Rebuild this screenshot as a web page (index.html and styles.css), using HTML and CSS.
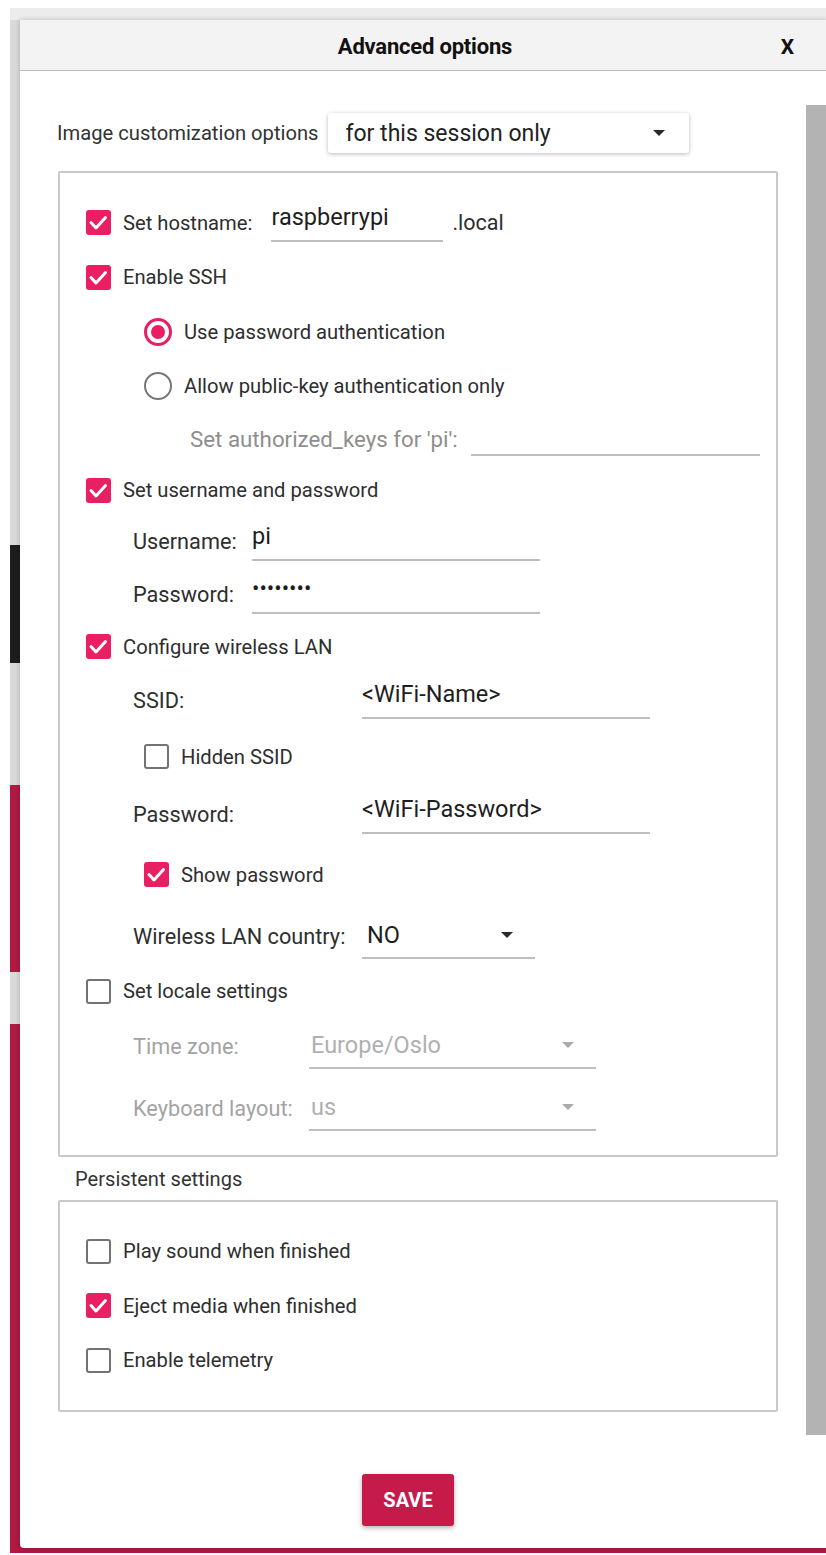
FILE: index.html
```html
<!DOCTYPE html>
<html lang="en">
<head>
<meta charset="utf-8">
<title>Advanced options</title>
<link rel="stylesheet" href="styles.css">
</head>
<body>
<div class="app">
  <section class="dialog">
    <header class="dialog-header">
      <span></span>
      <h1 class="dialog-title">Advanced options</h1>
      <span class="dialog-close">X</span>
    </header>

    <div class="dialog-main">
      <div class="scroll-content">
        <div class="scope-row">
          <span class="scope-label">Image customization options</span>
          <div class="select">
            <span>for this session only</span>
            <span class="caret"></span>
          </div>
        </div>

        <div class="group group-session">
          <div class="row h55">
            <span class="check on"><svg viewBox="0 0 25 25"><path d="M5 12.5l5 5.5 9.5-10.5"/></svg></span>
            <span class="label">Set hostname:</span>
            <span class="field field-host">raspberrypi</span>
            <span class="suffix">.local</span>
          </div>
          <div class="row h54">
            <span class="check on"><svg viewBox="0 0 25 25"><path d="M5 12.5l5 5.5 9.5-10.5"/></svg></span>
            <span class="label">Enable SSH</span>
          </div>
          <div class="row h55 indent-option">
            <span class="radio on"></span>
            <span class="label">Use password authentication</span>
          </div>
          <div class="row h54 indent-option">
            <span class="radio"></span>
            <span class="label">Allow public-key authentication only</span>
          </div>
          <div class="row h52 indent-keys">
            <span class="label muted col-keys">Set authorized_keys for 'pi':</span>
            <span class="field field-keys"></span>
          </div>
          <div class="row h50">
            <span class="check on"><svg viewBox="0 0 25 25"><path d="M5 12.5l5 5.5 9.5-10.5"/></svg></span>
            <span class="label">Set username and password</span>
          </div>
          <div class="row h53 indent-field">
            <span class="label sub col-user">Username:</span>
            <span class="field field-user">pi</span>
          </div>
          <div class="row h53 indent-field">
            <span class="label sub col-user">Password:</span>
            <span class="field field-user dots">&bull;&bull;&bull;&bull;&bull;&bull;&bull;&bull;</span>
          </div>
          <div class="row h51">
            <span class="check on"><svg viewBox="0 0 25 25"><path d="M5 12.5l5 5.5 9.5-10.5"/></svg></span>
            <span class="label">Configure wireless LAN</span>
          </div>
          <div class="row h56 indent-field">
            <span class="label sub col-wifi">SSID:</span>
            <span class="field field-wifi">&lt;WiFi-Name&gt;</span>
          </div>
          <div class="row h57 indent-option">
            <span class="check"></span>
            <span class="label">Hidden SSID</span>
          </div>
          <div class="row h59 indent-field">
            <span class="label sub col-wifi">Password:</span>
            <span class="field field-wifi">&lt;WiFi-Password&gt;</span>
          </div>
          <div class="row h61 indent-option">
            <span class="check on"><svg viewBox="0 0 25 25"><path d="M5 12.5l5 5.5 9.5-10.5"/></svg></span>
            <span class="label">Show password</span>
          </div>
          <div class="row h62 indent-field">
            <span class="label sub col-wifi">Wireless LAN country:</span>
            <span class="combo combo-country">NO<span class="caret"></span></span>
          </div>
          <div class="row h48">
            <span class="check"></span>
            <span class="label">Set locale settings</span>
          </div>
          <div class="row h62 indent-field">
            <span class="label sub muted-strong col-locale">Time zone:</span>
            <span class="combo combo-locale disabled">Europe/Oslo<span class="caret"></span></span>
          </div>
          <div class="row h62 indent-field">
            <span class="label sub muted-strong col-locale">Keyboard layout:</span>
            <span class="combo combo-locale disabled">us<span class="caret"></span></span>
          </div>
        </div>

        <div class="group-title">Persistent settings</div>

        <div class="group group-persistent">
          <div class="row h54">
            <span class="check"></span>
            <span class="label">Play sound when finished</span>
          </div>
          <div class="row h55">
            <span class="check on"><svg viewBox="0 0 25 25"><path d="M5 12.5l5 5.5 9.5-10.5"/></svg></span>
            <span class="label">Eject media when finished</span>
          </div>
          <div class="row h54">
            <span class="check"></span>
            <span class="label">Enable telemetry</span>
          </div>
        </div>
      </div>
      <div class="scrollbar"></div>
    </div>

    <footer class="dialog-footer">
      <button class="btn-save" type="button">SAVE</button>
    </footer>
  </section>
</div>
</body>
</html>
```

FILE: styles.css
```css
html, body {
  margin: 0;
  background: #ffffff;
  overflow: hidden;
}

body {
  font-family: Roboto, "Liberation Sans", sans-serif;
  color: #2e2e2e;
}

/* application window behind the modal: grey canvas with logo and red bands */
.app {
  margin: 8px 0 0 10px;
  height: 1545px;
  box-sizing: border-box;
  padding: 12px 0 0 10px;
  overflow: hidden;
  background:
    linear-gradient(#ececec, #ececec) 0 0 / 100% 12px no-repeat,
    radial-gradient(circle at -40px 590px, #1d1d1d 0 56px, transparent 57px) no-repeat,
    linear-gradient(to bottom,
      #d9d9d9 0 537px,
      #1d1d1d 537px 655px,
      #d9d9d9 655px 777px,
      #ae1a44 777px 964px,
      #d9d9d9 964px 1016px,
      #ae1a44 1016px);
}

/* modal dialog */
.dialog {
  width: 810px;
  height: 1528px;
  background: #ffffff;
  border-radius: 0 0 4px 4px;
  box-shadow: 0 0 5px rgba(0, 0, 0, 0.22);
  display: flex;
  flex-direction: column;
}

.dialog-header {
  height: 51px;
  box-sizing: border-box;
  padding-top: 3px;
  background: #f3f3f3;
  border-bottom: 1px solid #bcbcbc;
  display: grid;
  grid-template-columns: 1fr auto 1fr;
  align-items: center;
}

.dialog-title {
  margin: 0;
  font-size: 22px;
  font-weight: 700;
  color: #111111;
  letter-spacing: -0.2px;
}

.dialog-close {
  justify-self: end;
  margin-right: 36px;
  font-size: 21px;
  font-weight: 700;
  color: #111111;
}

.dialog-main {
  display: flex;
  height: 1369px;
}

.scroll-content {
  flex: 1;
  padding: 42px 0 0 37px;
}

.scrollbar {
  width: 20px;
  height: 1330px;
  margin: 34px 4px 0 0;
  background: #b3b3b3;
}

/* scope selector */
.scope-row {
  display: flex;
  align-items: center;
  height: 40px;
}

.scope-label {
  font-size: 20.2px;
  color: #333333;
}

.select {
  margin-left: 9px;
  width: 361px;
  height: 40px;
  box-sizing: border-box;
  padding: 0 24px 0 18px;
  display: flex;
  align-items: center;
  justify-content: space-between;
  background: #ffffff;
  border-radius: 3px;
  box-shadow: 0 1px 4px rgba(0, 0, 0, 0.28);
  font-size: 23px;
  color: #222222;
}

.caret {
  width: 0;
  height: 0;
  border-left: 6.5px solid transparent;
  border-right: 6.5px solid transparent;
  border-top: 6.5px solid #2a2a2a;
}

/* group boxes */
.group {
  width: 720px;
  box-sizing: border-box;
  margin-left: 1px;
  border: 2px solid #c9c9c9;
  border-radius: 2px;
}

.group-session {
  margin-top: 18px;
  padding: 22px 0 16px 26px;
}

.group-persistent {
  padding: 22px 0 23px 26px;
}

.group-title {
  height: 43px;
  display: flex;
  align-items: center;
  padding-left: 18px;
  font-size: 20.1px;
  color: #333333;
}

/* rows */
.row {
  display: flex;
  align-items: center;
}

.h48 { height: 48px; }
.h50 { height: 50px; }
.h51 { height: 51px; }
.h52 { height: 52px; }
.h53 { height: 53px; }
.h54 { height: 54px; }
.h55 { height: 55px; }
.h56 { height: 56px; }
.h57 { height: 57px; }
.h59 { height: 59px; }
.h61 { height: 61px; }
.h62 { height: 62px; }

.indent-option { padding-left: 58px; }
.indent-field { padding-left: 47px; }
.indent-keys { padding-left: 104px; }

.label {
  font-size: 20.2px;
  color: #2e2e2e;
  white-space: nowrap;
}

.label.sub {
  font-size: 21.7px;
}

.check + .label,
.radio + .label {
  margin-left: 12px;
}

.muted { color: #8e8e8e; }
.muted-strong { color: #a3a3a3; }

.col-user { width: 119px; }
.col-wifi { width: 229px; }
.col-locale { width: 176px; }
.col-keys { width: 281px; font-size: 22.3px; }

/* checkboxes */
.check {
  flex: none;
  width: 25px;
  height: 25px;
  box-sizing: border-box;
  border: 2px solid #737373;
  border-radius: 3px;
  background: #ffffff;
}

.check.on {
  border: none;
  background: #e91e63;
}

.check svg {
  display: block;
  width: 25px;
  height: 25px;
  fill: none;
  stroke: #ffffff;
  stroke-width: 3;
  stroke-linecap: round;
  stroke-linejoin: round;
}

/* radio buttons */
.radio {
  flex: none;
  position: relative;
  width: 28px;
  height: 28px;
  box-sizing: border-box;
  border: 2px solid #777777;
  border-radius: 50%;
}

.radio.on {
  border: 3px solid #e91e63;
}

.radio.on::after {
  content: "";
  position: absolute;
  left: 4px;
  top: 4px;
  width: 14px;
  height: 14px;
  border-radius: 50%;
  background: #e91e63;
}

/* text fields */
.field {
  height: 38px;
  box-sizing: border-box;
  padding-bottom: 10px;
  display: flex;
  align-items: center;
  border-bottom: 2px solid #bfbfbf;
  font-size: 23.5px;
  color: #1e1e1e;
}

.field-host { width: 172px; margin-left: 19px; }
.field-user { width: 288px; }
.field-wifi { width: 288px; }
.field-keys { width: 289px; height: 34px; }

.dots {
  font-size: 22px;
}

.suffix {
  margin-left: 9px;
  font-size: 21.5px;
  color: #2e2e2e;
}

/* combo boxes */
.combo {
  height: 46px;
  box-sizing: border-box;
  padding: 0 22px 0 5px;
  display: flex;
  align-items: center;
  justify-content: space-between;
  border-bottom: 2px solid #bfbfbf;
  font-size: 23.5px;
  color: #1e1e1e;
}

.combo-country { width: 173px; }
.combo-locale { width: 287px; padding-left: 2px; }

.combo.disabled { color: #b0b0b0; }
.combo.disabled .caret { border-top-color: #ababab; }

/* footer */
.dialog-footer {
  height: 108px;
  box-sizing: border-box;
  padding: 34px 34px 0 0;
  display: flex;
  justify-content: center;
  align-items: flex-start;
}

.btn-save {
  width: 92px;
  height: 52px;
  border: none;
  border-radius: 3px;
  background: #c51a4a;
  color: #ffffff;
  font-family: Roboto, "Liberation Sans", sans-serif;
  font-size: 20px;
  font-weight: 700;
  box-shadow: 0 2px 5px rgba(0, 0, 0, 0.3);
}
```
